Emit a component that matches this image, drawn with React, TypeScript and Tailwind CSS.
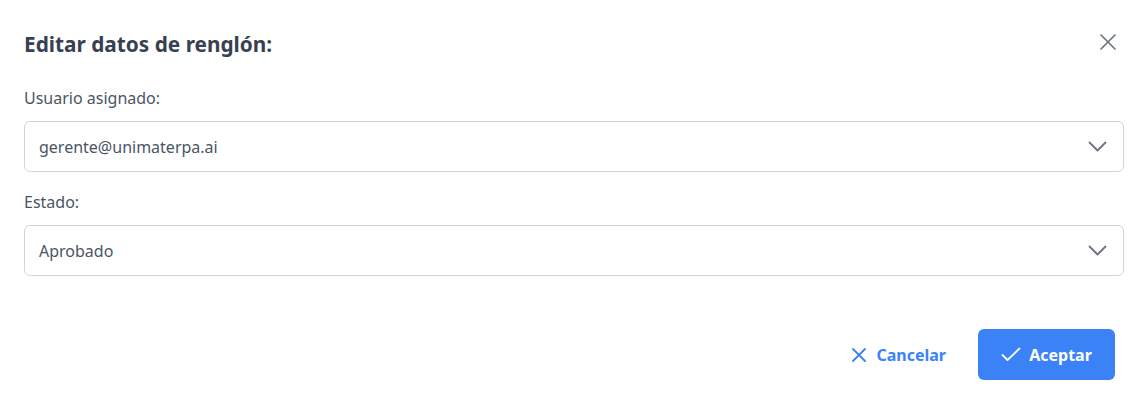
function Chevron() {
  return (
    <svg width="19" height="11" viewBox="0 0 19 11" fill="none" className="text-[#6b7280]">
      <polyline points="1.5,1.5 9.5,9.5 17.5,1.5" stroke="currentColor" strokeWidth="1.8" strokeLinecap="round" strokeLinejoin="round" />
    </svg>
  );
}

function Cross({ size, stroke }: { size: number; stroke: number }) {
  return (
    <svg width={size} height={size} viewBox={`0 0 ${size} ${size}`} fill="none">
      <path d={`M1 1L${size - 1} ${size - 1}M${size - 1} 1L1 ${size - 1}`} stroke="currentColor" strokeWidth={stroke} strokeLinecap="round" />
    </svg>
  );
}

function SelectBox({ value }: { value: string }) {
  return (
    <div className="flex h-[51px] items-center justify-between rounded-md border border-[#d1d5db] bg-white pl-[14px] pr-[16px]">
      <span className="text-[16px] text-[#4b5563]">{value}</span>
      <Chevron />
    </div>
  );
}

export default function App() {
  return (
    <div className="h-[405px] w-[1148px] bg-white font-['Noto_Sans',sans-serif]">
      <div className="flex items-start justify-between pl-6 pr-[32px] pt-[30px]">
        <h2 className="text-[20.8px] font-bold leading-[28px] text-[#374151]">Editar datos de renglón:</h2>
        <span className="mt-[4px] text-[#6b7280]">
          <Cross size={16} stroke={1.6} />
        </span>
      </div>
      <div className="flex flex-col px-6 pt-[28px]">
        <label className="mb-[11px] text-[16px] leading-[24px] text-[#4b5563]">Usuario asignado:</label>
        <SelectBox value="gerente@unimaterpa.ai" />
        <label className="mb-[11px] mt-[18px] text-[16px] leading-[24px] text-[#4b5563]">Estado:</label>
        <SelectBox value="Aprobado" />
      </div>
      <div className="flex items-center justify-end gap-[32px] pr-[33px] pt-[53px]">
        <button className="flex items-center gap-[10px] text-[16px] font-bold text-[#3b82f6]">
          <Cross size={14} stroke={1.8} />
          Cancelar
        </button>
        <button className="flex h-[51px] w-[137px] items-center justify-center gap-[8px] rounded-md bg-[#3b82f6] text-[16px] font-bold text-white">
          <svg width="20" height="15" viewBox="0 0 20 15" fill="none">
            <polyline points="1.5,8 6.5,13 18.5,1.5" stroke="currentColor" strokeWidth="1.8" strokeLinecap="round" strokeLinejoin="round" />
          </svg>
          Aceptar
        </button>
      </div>
    </div>
  );
}
